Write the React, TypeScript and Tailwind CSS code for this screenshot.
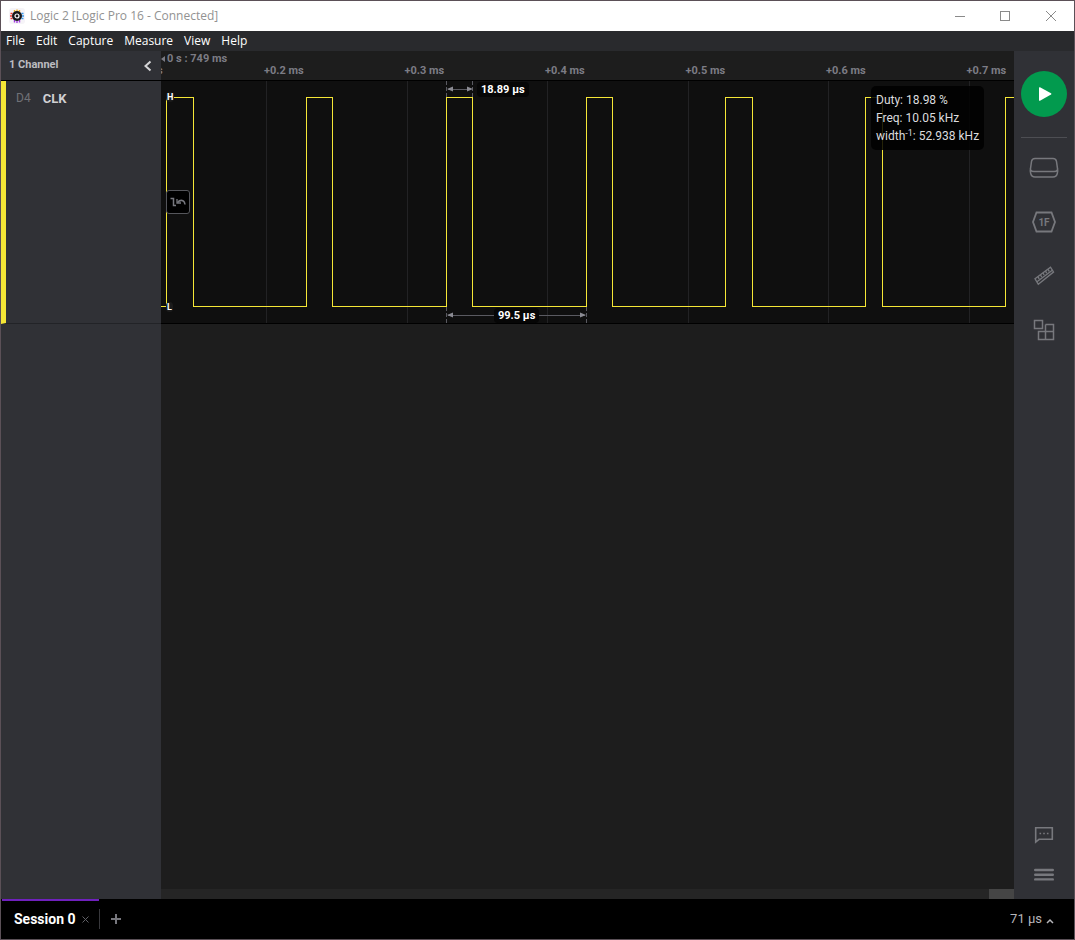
import React from "react";

const menus = ["File", "Edit", "Capture", "Measure", "View", "Help"];
const ticks = ["+0.2 ms", "+0.3 ms", "+0.4 ms", "+0.5 ms", "+0.6 ms", "+0.7 ms"];
const gridLines = [105, 246, 386, 527, 667, 808];

const HIGH = 16.5;
const LOW = 225.5;
const pulses: [number, number][] = [
  [5, 32],
  [145, 171],
  [285, 311],
  [425, 451],
  [564, 591],
  [704, 721],
  [844, 1200],
];

const wavePath =
  `M0 ${LOW}` +
  pulses
    .map(([rise, fall]) => `H${rise + 0.5}V${HIGH}H${fall + 0.5}V${LOW}`)
    .join("");

function LogicLogo() {
  return (
    <svg width="16" height="16" viewBox="0 0 16 16" fill="none" aria-hidden="true">
      <rect width="16" height="16" rx="3" fill="#f6f4f8" />
      <path d="M5.500 2v2M8 1.500v2M10.500 2v2" stroke="#f0b429" strokeWidth="1.400" />
      <path d="M5.500 12v2.500M8 12.500v2.500M10.500 12v2.500" stroke="#a03be0" strokeWidth="1.400" />
      <path d="M1.500 5.500h2M1 8h2M1.500 10.500h2" stroke="#ee3a30" strokeWidth="1.400" />
      <path d="M12.500 5.500h2M13 8h2M12.500 10.500h2" stroke="#3499ee" strokeWidth="1.400" />
      <circle cx="8" cy="8" r="5" fill="#17171a" />
      <circle cx="8" cy="8" r="2" stroke="#fff" strokeWidth="1.200" />
    </svg>
  );
}

function TitleBar() {
  return (
    <header className="flex h-[30px] shrink-0 items-center bg-white pl-2 font-['Open_Sans','Noto_Sans',sans-serif]">
      <LogicLogo />
      <h1 className="ml-[5px] text-xs text-[#929292]">Logic 2 [Logic Pro 16 - Connected]</h1>
      <div className="ml-auto flex text-[#8a8a8a]">
        <button aria-label="Minimize" className="flex h-[30px] w-[45px] items-center justify-center">
          <svg width="10" height="10" fill="none" stroke="currentColor" shapeRendering="crispEdges"><path d="M0 5.500h10" /></svg>
        </button>
        <button aria-label="Maximize" className="flex h-[30px] w-[46px] items-center justify-center">
          <svg width="10" height="10" fill="none" stroke="currentColor" shapeRendering="crispEdges"><rect x=".5" y=".5" width="9" height="9" /></svg>
        </button>
        <button aria-label="Close" className="flex h-[30px] w-[46px] items-center justify-center">
          <svg width="10" height="10" fill="none" stroke="currentColor"><path d="M0 0l10 10M10 0L0 10" /></svg>
        </button>
      </div>
    </header>
  );
}

function MenuBar() {
  return (
    <nav className="flex h-5 shrink-0 items-center gap-[11px] bg-[#292a2d] pl-[5px] font-['Open_Sans','Noto_Sans',sans-serif] text-xs text-white">
      {menus.map((name) => (
        <button key={name}>{name}</button>
      ))}
    </nav>
  );
}

function ChannelPanel() {
  return (
    <aside className="flex w-40 shrink-0 flex-col bg-[#303136]">
      <div className="flex h-[30px] items-center justify-between border-b border-black pl-2 pr-[9px]">
        <h2 className="text-[11px] font-bold text-[#bcbcc0]">1 Channel</h2>
        <button aria-label="Collapse channels" className="text-[#d4d4d6]">
          <svg width="9" height="12" viewBox="0 0 9 12" fill="none" stroke="currentColor" strokeWidth="2"><path d="M7.500 1.500L2.500 6l5 4.500" /></svg>
        </button>
      </div>
      <div className="flex h-[243px] gap-3 border-b border-l-[5px] border-b-[#222327] border-l-[#f5e636] pl-[10px] pt-[9px] leading-[18px]">
        <span className="text-xs text-[#707176]">D4</span>
        <span className="text-[13px] font-bold text-[#d0d0d3]">CLK</span>
      </div>
    </aside>
  );
}

function Timeline() {
  return (
    <div className="h-[30px] shrink-0 overflow-hidden border-b border-black bg-[#1d1d1d] pt-[3px] text-[11px] font-bold leading-[10px] text-[#7c7c85]">
      <div className="flex items-center gap-[2px]">
        <svg width="4" height="6" viewBox="0 0 4 6" fill="currentColor" aria-hidden="true"><path d="M4 0v6L0 3z" /></svg>
        <span>0 s : 749 ms</span>
      </div>
      <div className="mt-[2px] grid w-[946px] grid-cols-[103px_repeat(6,minmax(0,1fr))]">
        <span className="-ml-1">s</span>
        {ticks.map((tick) => (
          <span key={tick}>{tick}</span>
        ))}
      </div>
    </div>
  );
}

function Waveform() {
  return (
    <section aria-label="CLK waveform" className="relative h-[243px] shrink-0 overflow-hidden border-b border-black bg-[#0f0f0f]">
      <svg className="block h-full w-full" fill="none" aria-hidden="true">
        {gridLines.map((x) => (
          <path key={x} d={`M${x + 0.5} 0V242`} stroke="#222224" shapeRendering="crispEdges" />
        ))}
        <path d={wavePath} stroke="#f5e636" shapeRendering="crispEdges" />
        <g stroke="#5a5a61" shapeRendering="crispEdges">
          <path d="M285.500 0v16M311.500 0v16M285.500 226v16M425.500 226v16" strokeDasharray="4 2" strokeWidth="1" />
          <path d="M287 8.500h23M287 234.500h137" />
        </g>
        <path d="M286 8l6-2.500v5zM312 8l-6-2.500v5zM286 234l6-2.500v5zM425 234l-6-2.500v5z" fill="#8b8b93" />
      </svg>
      <span className="absolute left-[5px] top-[11px] rounded-sm bg-[#1b1b1b] px-px text-[9px] font-bold leading-[10px] text-white">H</span>
      <span className="absolute left-[5px] top-[221px] rounded-sm bg-[#1b1b1b] px-px text-[9px] font-bold leading-[10px] text-white">L</span>
      <span className="absolute left-[316px] top-px rounded bg-[#060606] px-1 text-[11px] font-bold leading-[15px] text-white">18.89 µs</span>
      <span className="absolute left-[333px] top-[227px] rounded bg-[#060606] px-1 text-[11px] font-bold leading-[15px] text-white">99.5 µs</span>
      <button aria-label="Trigger on edge" className="absolute left-[5px] top-[109px] flex size-6 items-center justify-center rounded-[3px] border border-[#55565b] bg-black text-[#77787f]">
        <svg width="16" height="10" viewBox="0 0 16 10" fill="none" stroke="currentColor" strokeWidth="1.500">
          <path d="M.5 1.500h3v7H6" />
          <path d="M15 7.500c-.5-4.500-4.500-5.500-7.500-2" />
          <path d="M7 2v4h4" strokeWidth="1.300" />
        </svg>
      </button>
      <div className="absolute left-[710px] top-[5px] h-16 whitespace-nowrap rounded-[5px] bg-black/85 px-[5px] py-[5px] text-xs leading-[18px] text-[#dcdcde]">
        <p>Duty: 18.98 %</p>
        <p>Freq: 10.05 kHz</p>
        <p>width<sup className="text-[9px]">-1</sup>: 52.938 kHz</p>
      </div>
    </section>
  );
}

function ToolRail() {
  return (
    <aside className="flex w-[60px] shrink-0 flex-col items-center bg-[#303136] pt-5 text-[#77787d]">
      <button aria-label="Start capture" className="flex size-[46px] items-center justify-center rounded-full bg-[#029a4e]">
        <svg width="14" height="16" viewBox="0 0 14 16" fill="#fff" className="ml-[2px]"><path d="M1 1.800Q1 .8 2 1.300L13 7.200Q14 8 13 8.600L2 14.700Q1 15.200 1 14.200z" /></svg>
      </button>
      <div className="mt-5 h-px w-[46px] bg-[#4d4e53]" />
      <button aria-label="Device settings" className="mt-[14px] flex h-8 items-center">
        <svg width="30" height="22" viewBox="0 0 30 22" fill="none" stroke="currentColor" strokeWidth="1.500">
          <path d="M6 1.500h18q3 0 3.500 3l1 7q.5 2.500-.2 5Q27.500 20 24 20H6q-3.500 0-4.300-3.500-.7-2.500-.2-5l1-7q.5-3 3.500-3z" />
          <path d="M1.500 13q1 1.500 3.500 1.500h20q2.500 0 3.500-1.500" />
        </svg>
      </button>
      <button aria-label="Analyzers" className="mt-[22px] flex h-8 items-center">
        <svg width="24" height="22" viewBox="0 0 24 22" fill="none" stroke="currentColor" strokeWidth="1.800">
          <path d="M4.500 1.500h15L23 11l-3.500 9.500h-15L1 11z" />
          <text x="12" y="15" textAnchor="middle" fontSize="10" fontWeight="700" fill="currentColor" stroke="none">1F</text>
        </svg>
      </button>
      <button aria-label="Measurements" className="mt-[22px] flex h-8 items-center">
        <svg width="22" height="20" viewBox="0 0 22 20" fill="none" stroke="currentColor" strokeWidth="1.400">
          <path d="M2 12.800L17.500 1.200 20.500 6 5.300 18.300z" />
          <path d="M4 15.800L19.300 4.200M5 10.800l1.200 2M7.500 9l1.200 2M10 7l1.200 2M12.500 5.200l1.200 2M15 3.300l1.200 2" />
        </svg>
      </button>
      <button aria-label="Extensions" className="mt-[22px] flex h-8 items-center">
        <svg width="22" height="22" viewBox="0 0 22 22" fill="none" stroke="currentColor" strokeWidth="1.500">
          <path d="M1.500 1.500h8v8h-8zM12.500 5.500h8v15h-15v-8h15M12.500 5.500v15" />
        </svg>
      </button>
      <button aria-label="Feedback" className="mt-auto flex h-5 items-center">
        <svg width="20" height="18" viewBox="0 0 20 18" fill="none" stroke="currentColor" strokeWidth="1.600">
          <path d="M1.700 1.700h16.600v11.600H5L1.700 16z" />
          <path d="M5.500 7.500h1.600M9.200 7.500h1.600M12.900 7.500h1.600" strokeWidth="1.600" />
        </svg>
      </button>
      <button aria-label="Main menu" className="mb-[14px] mt-5 flex h-5 items-center">
        <svg width="20" height="14" viewBox="0 0 20 14" fill="none" stroke="currentColor" strokeWidth="2.400" strokeLinecap="round"><path d="M1.200 2h17.600M1.200 6.700h17.600M1.200 11.400h17.600" /></svg>
      </button>
    </aside>
  );
}

function SessionBar() {
  return (
    <footer className="flex h-10 shrink-0 items-center bg-black">
      <div className="ml-px flex h-full w-[97px] items-center justify-between border-t-2 border-[#6f21bd] pb-[2px] pl-3 pr-[10px]">
        <button className="whitespace-nowrap text-sm font-bold text-white">Session 0</button>
        <button aria-label="Close session" className="text-[#606066]">
          <svg width="7" height="7" viewBox="0 0 7 7" fill="none" stroke="currentColor"><path d="M.5 .5l6 6M6.500 .5l-6 6" /></svg>
        </button>
      </div>
      <div className="h-5 w-px bg-[#38383c]" />
      <button aria-label="New session" className="ml-[11px] text-[#77777d]">
        <svg width="10" height="10" fill="none" stroke="currentColor" strokeWidth="2"><path d="M5 0v10M0 5h10" /></svg>
      </button>
      <button className="ml-auto mr-5 flex items-center gap-1 text-[13px] text-[#b6b6ba]">
        71 µs
        <svg width="8" height="6" viewBox="0 0 8 6" fill="none" stroke="currentColor" strokeWidth="1.500" className="mt-1"><path d="M1 5l3-3 3 3" /></svg>
      </button>
    </footer>
  );
}

export default function App() {
  return (
    <div className="flex min-h-screen flex-col border border-[#5b5057] bg-[#1d1d1d] font-['Roboto',sans-serif]">
      <TitleBar />
      <MenuBar />
      <div className="flex flex-1">
        <ChannelPanel />
        <main className="flex min-w-0 flex-1 flex-col bg-[#1d1d1d]">
          <Timeline />
          <Waveform />
          <div className="mt-auto flex h-[10px] justify-end bg-[#252525]">
            <div className="w-[25px] bg-[#454545]" />
          </div>
        </main>
        <ToolRail />
      </div>
      <SessionBar />
    </div>
  );
}
